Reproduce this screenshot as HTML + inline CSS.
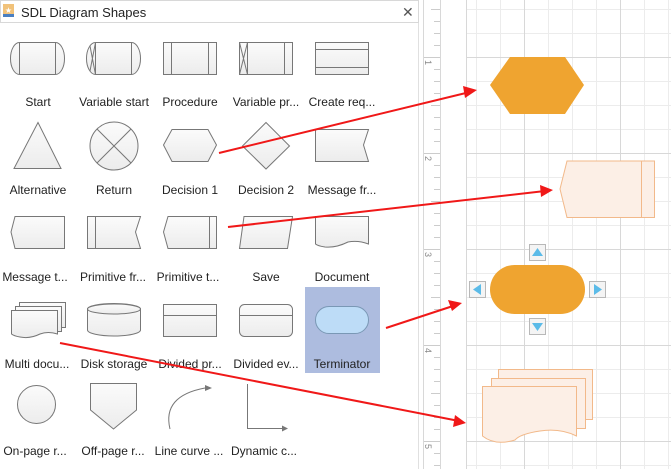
<!DOCTYPE html>
<html><head><meta charset="utf-8"><style>
html,body{margin:0;padding:0;width:671px;height:469px;overflow:hidden;background:#fff;font-family:"Liberation Sans",sans-serif}
svg{position:absolute;left:0;top:0}
text{font-family:"Liberation Sans",sans-serif;font-size:12px;fill:#222}
</style></head><body>
<svg width="671" height="469" viewBox="0 0 671 469" xmlns="http://www.w3.org/2000/svg">
<defs>
<linearGradient id="g" x1="0" y1="0" x2="0" y2="1"><stop offset="0" stop-color="#fbfbfb"/><stop offset="1" stop-color="#ececec"/></linearGradient>
</defs>
<rect x="466" y="0" width="205" height="469" fill="#fff"/>
<g stroke="#ececec" stroke-width="1">
<line x1="476.5" y1="0" x2="476.5" y2="469"/><line x1="500.5" y1="0" x2="500.5" y2="469"/><line x1="548.5" y1="0" x2="548.5" y2="469"/><line x1="572.5" y1="0" x2="572.5" y2="469"/><line x1="596.5" y1="0" x2="596.5" y2="469"/><line x1="644.5" y1="0" x2="644.5" y2="469"/><line x1="668.5" y1="0" x2="668.5" y2="469"/>
<line x1="466" y1="9.5" x2="671" y2="9.5"/><line x1="466" y1="33.5" x2="671" y2="33.5"/><line x1="466" y1="81.5" x2="671" y2="81.5"/><line x1="466" y1="105.5" x2="671" y2="105.5"/><line x1="466" y1="129.5" x2="671" y2="129.5"/><line x1="466" y1="177.5" x2="671" y2="177.5"/><line x1="466" y1="201.5" x2="671" y2="201.5"/><line x1="466" y1="225.5" x2="671" y2="225.5"/><line x1="466" y1="273.5" x2="671" y2="273.5"/><line x1="466" y1="297.5" x2="671" y2="297.5"/><line x1="466" y1="321.5" x2="671" y2="321.5"/><line x1="466" y1="369.5" x2="671" y2="369.5"/><line x1="466" y1="393.5" x2="671" y2="393.5"/><line x1="466" y1="417.5" x2="671" y2="417.5"/><line x1="466" y1="465.5" x2="671" y2="465.5"/>
</g>
<g stroke="#d8d8d8" stroke-width="1">
<line x1="466.5" y1="0" x2="466.5" y2="469"/><line x1="524.5" y1="0" x2="524.5" y2="469"/><line x1="620.5" y1="0" x2="620.5" y2="469"/>
<line x1="466" y1="57.5" x2="671" y2="57.5"/><line x1="466" y1="153.5" x2="671" y2="153.5"/><line x1="466" y1="249.5" x2="671" y2="249.5"/><line x1="466" y1="345.5" x2="671" y2="345.5"/><line x1="466" y1="441.5" x2="671" y2="441.5"/>
</g>
<line x1="423.5" y1="0" x2="423.5" y2="469" stroke="#d8d8d8"/>
<line x1="440.5" y1="0" x2="440.5" y2="469" stroke="#d8d8d8"/>
<g stroke="#ccc">
<line x1="431" y1="9.5" x2="440" y2="9.5"/><line x1="434" y1="21.5" x2="440" y2="21.5"/><line x1="434" y1="33.5" x2="440" y2="33.5"/><line x1="434" y1="45.5" x2="440" y2="45.5"/><line x1="424" y1="57.5" x2="440" y2="57.5"/>
<line x1="434" y1="69.5" x2="440" y2="69.5"/><line x1="434" y1="81.5" x2="440" y2="81.5"/><line x1="434" y1="93.5" x2="440" y2="93.5"/><line x1="431" y1="105.5" x2="440" y2="105.5"/><line x1="434" y1="117.5" x2="440" y2="117.5"/><line x1="434" y1="129.5" x2="440" y2="129.5"/><line x1="434" y1="141.5" x2="440" y2="141.5"/><line x1="424" y1="153.5" x2="440" y2="153.5"/>
<line x1="434" y1="165.5" x2="440" y2="165.5"/><line x1="434" y1="177.5" x2="440" y2="177.5"/><line x1="434" y1="189.5" x2="440" y2="189.5"/><line x1="431" y1="201.5" x2="440" y2="201.5"/><line x1="434" y1="213.5" x2="440" y2="213.5"/><line x1="434" y1="225.5" x2="440" y2="225.5"/><line x1="434" y1="237.5" x2="440" y2="237.5"/><line x1="424" y1="249.5" x2="440" y2="249.5"/>
<line x1="434" y1="261.5" x2="440" y2="261.5"/><line x1="434" y1="273.5" x2="440" y2="273.5"/><line x1="434" y1="285.5" x2="440" y2="285.5"/><line x1="431" y1="297.5" x2="440" y2="297.5"/><line x1="434" y1="309.5" x2="440" y2="309.5"/><line x1="434" y1="321.5" x2="440" y2="321.5"/><line x1="434" y1="333.5" x2="440" y2="333.5"/><line x1="424" y1="345.5" x2="440" y2="345.5"/>
<line x1="434" y1="357.5" x2="440" y2="357.5"/><line x1="434" y1="369.5" x2="440" y2="369.5"/><line x1="434" y1="381.5" x2="440" y2="381.5"/><line x1="431" y1="393.5" x2="440" y2="393.5"/><line x1="434" y1="405.5" x2="440" y2="405.5"/><line x1="434" y1="417.5" x2="440" y2="417.5"/><line x1="434" y1="429.5" x2="440" y2="429.5"/><line x1="424" y1="441.5" x2="440" y2="441.5"/><line x1="434" y1="453.5" x2="440" y2="453.5"/><line x1="434" y1="465.5" x2="440" y2="465.5"/>
</g>
<text x="0" y="0" transform="translate(425,60) rotate(90)" style="font-size:9px;fill:#888">1</text>
<text x="0" y="0" transform="translate(425,156) rotate(90)" style="font-size:9px;fill:#888">2</text>
<text x="0" y="0" transform="translate(425,252) rotate(90)" style="font-size:9px;fill:#888">3</text>
<text x="0" y="0" transform="translate(425,348) rotate(90)" style="font-size:9px;fill:#888">4</text>
<text x="0" y="0" transform="translate(425,444) rotate(90)" style="font-size:9px;fill:#888">5</text>
<polygon points="490,85 510,57 565,57 584,85 565,114 510,114" fill="#efa430"/>
<polygon points="560,189 567,161 654.5,161 654.5,217.5 567,217.5" fill="#fcefe6" stroke="#f2b98a"/>
<line x1="641.5" y1="161" x2="641.5" y2="217.5" stroke="#f2b98a"/>
<rect x="490" y="265" width="95" height="49" rx="24.5" fill="#efa430"/>
<g stroke="#b8b8b8" fill="#f4f4f4">
<rect x="529.5" y="244.5" width="16" height="16"/><rect x="469.5" y="281.5" width="16" height="16"/><rect x="589.5" y="281.5" width="16" height="16"/><rect x="529.5" y="318.5" width="16" height="16"/>
</g>
<g fill="#5bbbe8">
<polygon points="537.5,248 543,256 532,256"/><polygon points="473,289.5 481,284 481,295"/><polygon points="602,289.5 594,284 594,295"/><polygon points="537.5,331 543,323 532,323"/>
</g>
<g fill="#fcefe6" stroke="#f2b98a">
<rect x="498.5" y="369.5" width="94" height="50"/>
<rect x="491.5" y="378.5" width="94" height="50"/>
<path d="M482.5,386.5 H576.5 V436 Q560,428 540,431 Q520,434 515,440 Q495,446 482.5,436 Z"/>
</g>
<rect x="0" y="0" width="418" height="469" fill="#fff"/>
<line x1="418.5" y1="22" x2="418.5" y2="469" stroke="#e0e0e0"/>
<rect x="0.5" y="0.5" width="418" height="22" fill="#fff" stroke="#d8d8d8"/>
<rect x="3" y="4" width="11" height="10" fill="#f1c27a"/><rect x="3" y="14" width="11" height="3" fill="#4a7fc1"/>
<text x="8.5" y="13" style="font-size:8px;fill:#fff" text-anchor="middle">★</text>
<text x="21" y="17" style="font-size:13px;fill:#222">SDL Diagram Shapes</text>
<text x="402" y="17" style="font-size:14px;fill:#555">✕</text>
<rect x="305" y="287" width="75" height="86" fill="#adbcdf"/>
<g fill="url(#g)" stroke="#777" stroke-width="1">
<path d="M19.5,42.5 H55.5 A9,16 0 0 1 55.5,74.5 H19.5 A9,16 0 0 1 19.5,42.5 Z"/><line x1="19.5" y1="42.5" x2="19.5" y2="74.5"/><line x1="55.5" y1="42.5" x2="55.5" y2="74.5"/>
<path d="M95.5,42.5 H131.5 A9,16 0 0 1 131.5,74.5 H95.5 A9,16 0 0 1 95.5,42.5 Z"/><line x1="95.5" y1="42.5" x2="95.5" y2="74.5"/><line x1="131.5" y1="42.5" x2="131.5" y2="74.5"/><path d="M90,46 L95.5,74.5 M90,71 L95.5,42.5" fill="none"/>
<rect x="163.5" y="42.5" width="53" height="32"/><line x1="171.5" y1="42.5" x2="171.5" y2="74.5"/><line x1="208.5" y1="42.5" x2="208.5" y2="74.5"/>
<rect x="239.5" y="42.5" width="53" height="32"/><line x1="247.5" y1="42.5" x2="247.5" y2="74.5"/><line x1="284.5" y1="42.5" x2="284.5" y2="74.5"/><path d="M239.5,42.5 L247.5,74.5 M247.5,42.5 L239.5,74.5" fill="none"/>
<rect x="315.5" y="42.5" width="53" height="32"/><line x1="315.5" y1="49.5" x2="368.5" y2="49.5"/><line x1="315.5" y1="67.5" x2="368.5" y2="67.5"/>
<polygon points="38,122.5 61,168.5 14,168.5"/>
<circle cx="114" cy="146" r="24"/><path d="M97,129 L131,163 M131,129 L97,163" fill="none"/>
<polygon points="163.5,145 172,129.5 208,129.5 216.5,145 208,161.5 172,161.5"/>
<polygon points="266,122.5 289.5,146 266,169 242.5,146"/>
<polygon points="315.5,129.5 368.5,129.5 363.5,145 368.5,161.5 315.5,161.5"/>
<polygon points="15,216.5 64.5,216.5 64.5,248.5 15,248.5 11,232"/>
<polygon points="87.5,216.5 140.5,216.5 135.5,232 140.5,248.5 87.5,248.5"/><line x1="95.5" y1="216.5" x2="95.5" y2="248.5"/>
<polygon points="168,216.5 216.5,216.5 216.5,248.5 168,248.5 163.5,232"/><line x1="209.5" y1="216.5" x2="209.5" y2="248.5"/>
<polygon points="244,216.5 292.5,216.5 287.5,248.5 239.5,248.5"/>
<path d="M315.5,216.5 H368.5 V244 Q358,240 348,242 Q336,248 325,247 Q318,246 315.5,244 Z"/>
<rect x="19.5" y="302.5" width="46" height="25"/><rect x="15.5" y="306.5" width="46" height="25"/>
<path d="M11.5,310.5 H57.5 V334 Q48,331 40,334 Q30,339 20,337 Q14,336 11.5,334 Z"/>
<path d="M87.5,309 A26.5,5.5 0 0 1 140.5,309 V330 A26.5,6 0 0 1 87.5,330 Z"/><ellipse cx="114" cy="309" rx="26.5" ry="5"/>
<rect x="163.5" y="304.5" width="53" height="32"/><line x1="163.5" y1="315.5" x2="216.5" y2="315.5"/>
<rect x="239.5" y="304.5" width="53" height="32" rx="5"/><line x1="239.5" y1="315.5" x2="292.5" y2="315.5"/>
<circle cx="36.5" cy="404.5" r="19"/>
<polygon points="90.5,383.5 136.5,383.5 136.5,410 113.5,429 90.5,410"/>
</g>
<rect x="315.5" y="306.5" width="53" height="27" rx="13.5" fill="#bddcf7" stroke="#7a98b5"/>
<g fill="none" stroke="#777">
<path d="M170,429 Q162,396 205,388"/><polyline points="247.5,384 247.5,428.5 285,428.5"/>
</g>
<polygon points="212,388 205,385 205,391" fill="#777"/><polygon points="288,428.5 282,425.5 282,431.5" fill="#777"/>
<g text-anchor="middle">
<text x="38" y="106">Start</text><text x="114" y="106">Variable start</text><text x="190" y="106">Procedure</text><text x="266" y="106">Variable pr...</text><text x="342" y="106">Create req...</text>
<text x="38" y="194">Alternative</text><text x="114" y="194">Return</text><text x="190" y="194">Decision 1</text><text x="266" y="194">Decision 2</text><text x="342" y="194">Message fr...</text>
<text x="35" y="281">Message t...</text><text x="113" y="281">Primitive fr...</text><text x="188" y="281">Primitive t...</text><text x="266" y="281">Save</text><text x="342" y="281">Document</text>
<text x="37" y="368">Multi docu...</text><text x="114" y="368">Disk storage</text><text x="190" y="368">Divided pr...</text><text x="266" y="368">Divided ev...</text><text x="342" y="368">Terminator</text>
<text x="35" y="455">On-page r...</text><text x="113" y="455">Off-page r...</text><text x="189" y="455">Line curve ...</text><text x="264" y="455">Dynamic c...</text>
</g>
<g stroke="#f01818" stroke-width="2" fill="none">
<line x1="219" y1="153" x2="470" y2="92"/><line x1="228" y1="227" x2="545" y2="191"/><line x1="386" y1="328" x2="456" y2="305"/><line x1="60" y1="343" x2="459" y2="421"/>
</g>
<g fill="#f01818">
<polygon points="477,90 465,98 463,86"/><polygon points="553,190 541,197 540,185"/><polygon points="462,303 452,311 448,300"/><polygon points="466,423 453,427 455,415"/>
</g>
</svg>
</body></html>
